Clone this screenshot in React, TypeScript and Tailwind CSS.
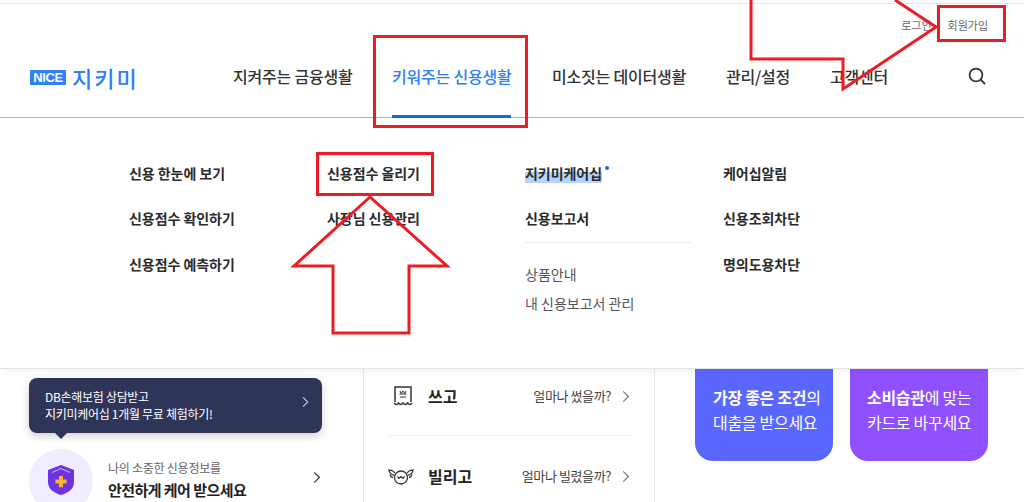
import React from "react";

function Chevron({ className }: { className?: string }) {
  return (
    <svg viewBox="0 0 10 16" className={className} fill="none" stroke="currentColor" strokeWidth="1.5">
      <path d="M1.5 1.5 8 8l-6.500 6.500" />
    </svg>
  );
}

function MenuLink({ children }: { children: React.ReactNode }) {
  return <a className="block h-[20px] text-[14px] leading-[20px] font-bold text-[#2b2b2b] tracking-[-0.05px] whitespace-nowrap">{children}</a>;
}

function MenuColumn({ items }: { items: string[] }) {
  return (
    <div className="w-[198px] flex flex-col gap-[25.400px]">
      {items.map((t) => (
        <MenuLink key={t}>{t}</MenuLink>
      ))}
    </div>
  );
}

export default function App() {
  return (
    <div className="relative w-[1024px] h-[502px] overflow-hidden bg-white font-['Noto_Sans_CJK_KR','Noto_Sans',sans-serif]">
      {/* top edge */}
      <div className="h-[4px] border-b border-[#e6e6e6]" />

      {/* utility */}
      <div className="h-[34px] pr-[36px] flex justify-end items-center gap-[16px] text-[11px] text-[#666] pt-[8px]">
        <span>로그인</span>
        <span>회원가입</span>
      </div>

      {/* header */}
      <header className="h-[80px] border-b border-[#8db6fb] flex items-start pl-[30px] relative">
        <div className="flex items-center gap-[6px] mt-[29px] w-[203px]">
          <span className="w-[36px] h-[15px] bg-[#2f80f5] text-white text-[13px] leading-[15px] font-bold text-center tracking-[-0.4px] font-['Liberation_Sans',sans-serif]">NICE</span>
          <span className="text-[#2f80f5] text-[22px] leading-[20px] font-medium tracking-[2px]">지키미</span>
        </div>
        <nav className="flex items-start text-[16px] leading-[22px] font-medium text-[#333] tracking-[-0.2px] mt-[27px] whitespace-nowrap">
          <a className="w-[159px]">지켜주는 금융생활</a>
          <a className="w-[160px] h-[53px] text-[#2f80f5] relative">
            키워주는 신용생활
            <span className="absolute left-0 top-[50px] w-[119px] h-[3px] bg-[#0f6de8]" />
          </a>
          <a className="w-[174px]">미소짓는 데이터생활</a>
          <a className="w-[104px]">관리/설정</a>
          <a className="w-[138px]">고객센터</a>
          <svg viewBox="0 0 18 18" className="w-[18px] h-[18px] mt-[2px]" fill="none" stroke="#333" strokeWidth="1.800">
            <circle cx="8" cy="8" r="6.400" />
            <path d="m12.800 12.800 3.700 3.700" strokeLinecap="round" />
          </svg>
        </nav>
      </header>

      {/* mega menu */}
      <section className="h-[251px] border-b border-[#e4e4e4] shadow-[0_2px_8px_rgba(0,0,0,0.06)] pl-[129px] pt-[45px] flex relative z-10 bg-white">
        <MenuColumn items={["신용 한눈에 보기", "신용점수 확인하기", "신용점수 예측하기"]} />
        <MenuColumn items={["신용점수 올리기", "사장님 신용관리"]} />
        <div className="w-[198px] flex flex-col">
          <div className="flex items-start h-[20px]">
            <span className="text-[14px] leading-[20px] font-bold text-[#2b2b2b] tracking-[-0.05px] bg-[linear-gradient(transparent_45%,#b5d4fa_45%)]">지키미케어십</span>
            <span className="w-[4px] h-[4px] rounded-full bg-[#0f6de8] ml-[3px] mt-[3px]" />
          </div>
          <div className="mt-[25.400px]">
            <MenuLink>신용보고서</MenuLink>
          </div>
          <div className="w-[166px] border-t border-[#ececec] mt-[14px]" />
          <div className="mt-[21px] text-[14px] leading-[20px] text-[#555]">상품안내</div>
          <div className="mt-[9px] text-[14px] leading-[20px] text-[#555]">내 신용보고서 관리</div>
        </div>
        <MenuColumn items={["케어십알림", "신용조회차단", "명의도용차단"]} />
      </section>

      {/* page below */}
      <main className="flex h-[133px] pl-[29px]">
        <div className="w-[334px] pt-[9px]">
          <div className="relative w-[293px] h-[55px] rounded-[8px] bg-[#2e3558] shadow-[0_3px_8px_rgba(0,0,0,0.2)] pl-[16px] pt-[10px] flex justify-between text-white">
            <div className="text-[12px] leading-[17px] tracking-[-0.3px]">
              <div>DB손해보험 상담받고</div>
              <div>지키미케어십 1개월 무료 체험하기!</div>
            </div>
            <Chevron className="w-[7px] h-[12px] mt-[8px] mr-[13px] text-[#d7d9e4]" />
            <span className="absolute left-[26px] top-[55px] w-0 h-0 border-x-[6px] border-x-transparent border-t-[6px] border-t-[#2e3558]" />
          </div>
          <div className="flex items-start mt-[16px] w-[293px]">
            <div className="w-[64px] h-[64px] rounded-full bg-[#f1ecff] flex items-center justify-center shrink-0">
              <svg viewBox="0 0 28 32" className="w-[28px] h-[32px] mb-[2px]">
                <path d="M14 1 27 6v12c0 7-6 11-13 13C7 29 1 25 1 18V6z" fill="#6d35e0" />
                <path d="M5 8.500 14 4.500l9 4" fill="none" stroke="#cdb6ff" strokeWidth="1" />
                <path d="M11.500 11h5v4.500H21v5h-4.500V25h-5v-4.500H7v-5h4.500z" fill="#f9b52c" transform="translate(2.800 3.200) scale(0.800)" />
              </svg>
            </div>
            <div className="ml-[15px] mt-[10px] flex-1">
              <div className="text-[12px] leading-[18px] text-[#666] tracking-[-0.25px]">나의 소중한 신용정보를</div>
              <div className="text-[15px] leading-[22px] mt-[2px] font-bold text-[#222] tracking-[-0.55px]">안전하게 케어 받으세요</div>
            </div>
            <Chevron className="w-[8px] h-[13px] mt-[22px] mr-[1px] text-[#333]" />
          </div>
        </div>

        <div className="w-[292px] h-full border-x border-[#e8e8e8] px-[24px] flex flex-col">
          <div className="h-[67px] flex items-center border-b border-[#f0f0f0] pl-[5px] pb-[12px]">
            <svg viewBox="0 0 20 22" className="w-[20px] h-[22px]" fill="none" stroke="#333" strokeWidth="1.500">
              <path d="M2 17V2h16v15" />
              <path d="M1 18c2 2 3 2 4.500 0 1.500 2 3 2 4.500 0 1.500 2 3 2 4.500 0 1.500 2 3 2 4.500 0" />
              <path d="M6.500 9h7M7 12h6M7 6l1.200 2.500L10 6l1.800 2.500L13 6" strokeWidth="1" />
            </svg>
            <span className="ml-[15px] text-[16px] font-bold text-[#222]">쓰고</span>
            <span className="ml-auto text-[13px] text-[#444] tracking-[-0.4px]">얼마나 썼을까?</span>
            <Chevron className="w-[8px] h-[13px] ml-[11px] text-[#777]" />
          </div>
          <div className="flex-1 flex items-start pt-[29px]">
            <svg viewBox="0 0 26 18" className="w-[26px] h-[18px] mt-[3px] shrink-0" fill="none" stroke="#333" strokeWidth="1.300">
              <circle cx="13" cy="9.500" r="6.500" />
              <path d="M9.500 8l1.300 3L13 8l2.200 3 1.300-3M9.800 9.500h6.400" strokeWidth="0.900" />
              <path d="M6 7C4 7 1 5 1 2c1 .5 2 .5 3 .5C5 3 6 4 7 5M20 7c2 0 5-2 5-5-1 .5-2 .5-3 .5-1 .5-2 1.500-3 2.500M5 9.500C3.500 9.500 2.500 8 2 6.500M21 9.500c1.500 0 2.500-1.500 3-3" />
            </svg>
            <span className="ml-[14px] text-[16px] leading-[22px] font-bold text-[#222]">빌리고</span>
            <span className="ml-auto text-[13px] leading-[22px] text-[#444] tracking-[-0.4px]">얼마나 빌렸을까?</span>
            <Chevron className="w-[8px] h-[13px] ml-[11px] mt-[5px] text-[#777]" />
          </div>
        </div>

        <div className="flex items-start gap-[17px] pl-[40px]">
          <div className="w-[138px] h-[92px] rounded-b-[18px] bg-[#5a67ff] pl-[18px] pt-[16px] text-white text-[16px] leading-[25px] tracking-[-0.3px]">
            <div><b>가장 좋은 조건</b>의</div>
            <div>대출을 받으세요</div>
          </div>
          <div className="w-[138px] h-[92px] rounded-b-[18px] bg-[#9050ff] pl-[17px] pt-[16px] text-white text-[16px] leading-[25px] tracking-[-0.3px]">
            <div><b>소비습관</b>에 맞는</div>
            <div>카드로 바꾸세요</div>
          </div>
        </div>
      </main>

      {/* hand-drawn annotations laid over the page */}
      <svg viewBox="0 0 1024 502" className="absolute inset-0 w-[1024px] h-[502px] pointer-events-none z-20" fill="none" stroke="#ed1c24" strokeWidth="3">
        <path d="M751 0V59H843V89L936 27L895 0" />
        <path d="M370 197 294 266H333V333H409V266H447Z" />
      </svg>
      <div className="absolute left-[373px] top-[35px] w-[155px] h-[93px] border-[3px] border-[#ed1c24] z-20" />
      <div className="absolute left-[937px] top-[5px] w-[69px] h-[37px] border-[3px] border-[#ed1c24] z-20" />
      <div className="absolute left-[316px] top-[152px] w-[118px] h-[44px] border-[3px] border-[#ed1c24] z-20" />
    </div>
  );
}
